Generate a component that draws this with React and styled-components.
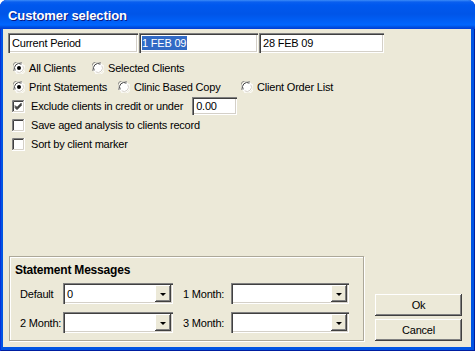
import React from 'react';
import styled, { createGlobalStyle } from 'styled-components';

const Global = createGlobalStyle`
  html, body { margin: 0; padding: 0; background: #fff; }
  body { font-family: "Liberation Sans", Arial, sans-serif; font-size: 11px; color: #000; letter-spacing: -0.2px; }
  * { box-sizing: border-box; }
`;

const Window = styled.div`
  width: 475px;
  height: 351px;
  display: flex;
  flex-direction: column;
  background: #0054E3;
  border-radius: 7px 7px 0 0;
  overflow: hidden;
  box-shadow: inset 1px 0 0 #0831D9, inset -1px 0 0 #001EA0, inset 0 -1px 0 #001EA0;
`;

const TitleBar = styled.div`
  height: 29px;
  flex: none;
  display: flex;
  align-items: center;
  padding: 2px 0 0 8px;
  color: #fff;
  font-weight: bold;
  font-size: 13px;
  letter-spacing: -0.1px;
  text-shadow: 1px 1px 0 #0A1883;
  background: linear-gradient(to bottom,
    #3C8CF8 0px, #0A5FEF 2px, #0058EE 5px, #0055E8 14px,
    #0061F8 22px, #0066FF 25px, #0050E0 27px, #003DD7 29px);
`;

const Client = styled.div`
  flex: 1;
  margin: 0 4px 4px 3px;
  background: #ECE9D8;
  display: flex;
  flex-direction: column;
  padding: 4px 5px 6px 5px;
`;

const FieldRow = styled.div`
  display: flex;
  gap: 1px;
`;

const sunken = `
  background: #fff;
  box-shadow: inset 1px 1px 0 #808080, inset 2px 2px 0 #404040,
    inset -1px -1px 0 #fff, inset -2px -2px 0 #D4D0C8;
`;

const Field = styled.div`
  ${sunken}
  width: ${p => p.$w}px;
  height: ${p => p.$h || 20}px;
  display: flex;
  align-items: center;
  padding-left: ${p => p.$pad || 4}px;
  white-space: nowrap;
  overflow: hidden;
`;

const Selected = styled.span`
  background: #316AC5;
  color: #fff;
  line-height: 14px;
  padding: 0 1px 0 0;
`;

const Options = styled.div`
  margin-top: 6px;
  display: flex;
  flex-direction: column;
  gap: 1px;
`;

const Row = styled.div`
  height: 18px;
  display: flex;
  align-items: center;
  padding-left: ${p => p.$pl || 5}px;
`;

const Choice = styled.div`
  width: ${p => (p.$w ? p.$w + 'px' : 'auto')};
  display: flex;
  align-items: center;
  gap: ${p => p.$gap || 4}px;
  white-space: nowrap;
`;

const SmallInput = styled(Field)`
  margin-left: 9px;
  height: 18px;
`;

const Spacer = styled.div`
  flex: 1;
`;

const Bottom = styled.div`
  display: flex;
  align-items: flex-end;
`;

const Group = styled.div`
  margin-left: 1px;
  width: 355px;
  height: 85px;
  border: 1px solid #ACA899;
  box-shadow: inset 1px 1px 0 #fff, 1px 1px 0 #fff;
  padding: 6px 0 0 10px;
  display: flex;
  flex-direction: column;
`;

const GroupTitle = styled.div`
  font-weight: bold;
  font-size: 12px;
  line-height: 14px;
  margin-left: -5px;
`;

const ComboGrid = styled.div`
  margin-top: 6px;
  display: grid;
  grid-template-columns: 43px 110px 10px 48px 118px;
  row-gap: 8px;
  align-items: center;
`;

const Label = styled.div`
  white-space: nowrap;
  grid-column: ${p => p.$col};
`;

const Combo = styled.div`
  ${sunken}
  grid-column: ${p => p.$col};
  height: 21px;
  display: flex;
  align-items: stretch;
  padding: 2px;
`;

const ComboText = styled.div`
  flex: 1;
  display: flex;
  align-items: center;
  padding-left: 2px;
`;

const DropBtn = styled.div`
  width: 16px;
  background: #ECE9D8;
  box-shadow: inset -1px -1px 0 #404040, inset 1px 1px 0 #fff, inset -2px -2px 0 #808080;
  display: flex;
  align-items: center;
  justify-content: center;
  &::after {
    content: '';
    border-left: 3px solid transparent;
    border-right: 3px solid transparent;
    border-top: 3px solid #000;
    margin-top: 1px;
  }
`;

const Buttons = styled.div`
  margin-left: 11px;
  display: flex;
  flex-direction: column;
  gap: 3px;
`;

const Button = styled.button`
  width: 87px;
  height: 22px;
  border: none;
  padding: 0;
  background: #ECE9D8;
  font-family: "Liberation Sans", Arial, sans-serif;
  font-size: 11px;
  letter-spacing: -0.2px;
  color: #000;
  box-shadow: inset -1px -1px 0 #404040, inset 1px 1px 0 #fff, inset -2px -2px 0 #808080;
`;

function Radio({ checked }) {
  return (
    <svg width="12" height="12" viewBox="0 0 12 12">
      <circle cx="6" cy="6" r="5.5" fill="#fff" />
      <path d="M1.2 9 A5.5 5.5 0 0 1 9 1.2" fill="none" stroke="#808080" strokeWidth="1" />
      <path d="M2.2 8.4 A4.5 4.5 0 0 1 8.4 2.2" fill="none" stroke="#404040" strokeWidth="1" />
      <path d="M10.8 3 A5.5 5.5 0 0 1 3 10.8" fill="none" stroke="#fff" strokeWidth="1" />
      <path d="M9.8 3.6 A4.5 4.5 0 0 1 3.6 9.8" fill="none" stroke="#D4D0C8" strokeWidth="1" />
      {checked && <circle cx="6" cy="6" r="2" fill="#000" />}
    </svg>
  );
}

function Check({ checked }) {
  return (
    <svg width="13" height="13" viewBox="0 0 13 13">
      <rect x="0" y="0" width="13" height="13" fill="#fff" />
      <path d="M0.5 12 V0.5 H12" fill="none" stroke="#808080" />
      <path d="M1.5 11 V1.5 H11" fill="none" stroke="#404040" />
      <path d="M0 12.5 H12.5 V0" fill="none" stroke="#fff" />
      <path d="M1 11.5 H11.5 V1" fill="none" stroke="#D4D0C8" />
      {checked && (
        <path d="M3 5.5 L5 7.5 L9.5 3 M3 6.5 L5 8.5 L9.5 4 M3 7.5 L5 9.5 L9.5 5" fill="none" stroke="#000" strokeWidth="1" />
      )}
    </svg>
  );
}

export default function App() {
  return (
    <>
      <Global />
      <Window>
        <TitleBar>Customer selection</TitleBar>
        <Client>
          <FieldRow>
            <Field $w={130}>Current Period</Field>
            <Field $w={119} $pad={3}><Selected>1 FEB 09</Selected></Field>
            <Field $w={125}>28 FEB 09</Field>
          </FieldRow>
          <Options>
            <Row>
              <Choice $w={79}><Radio checked />All Clients</Choice>
              <Choice><Radio />Selected Clients</Choice>
            </Row>
            <Row>
              <Choice $w={105}><Radio checked />Print Statements</Choice>
              <Choice $w={123}><Radio />Clinic Based Copy</Choice>
              <Choice><Radio />Client Order List</Choice>
            </Row>
            <Row $pl={4}>
              <Choice $gap={6}><Check checked />Exclude clients in credit or under</Choice>
              <SmallInput $w={45}>0.00</SmallInput>
            </Row>
            <Row $pl={4}>
              <Choice $gap={6}><Check />Save aged analysis to clients record</Choice>
            </Row>
            <Row $pl={4}>
              <Choice $gap={6}><Check />Sort by client marker</Choice>
            </Row>
          </Options>
          <Spacer />
          <Bottom>
            <Group>
              <GroupTitle>Statement Messages</GroupTitle>
              <ComboGrid>
                <Label $col={1}>Default</Label>
                <Combo $col={2}><ComboText>0</ComboText><DropBtn /></Combo>
                <Label $col={4}>1 Month:</Label>
                <Combo $col={5}><ComboText /><DropBtn /></Combo>
                <Label $col={1}>2 Month:</Label>
                <Combo $col={2}><ComboText /><DropBtn /></Combo>
                <Label $col={4}>3 Month:</Label>
                <Combo $col={5}><ComboText /><DropBtn /></Combo>
              </ComboGrid>
            </Group>
            <Buttons>
              <Button>Ok</Button>
              <Button>Cancel</Button>
            </Buttons>
          </Bottom>
        </Client>
      </Window>
    </>
  );
}
